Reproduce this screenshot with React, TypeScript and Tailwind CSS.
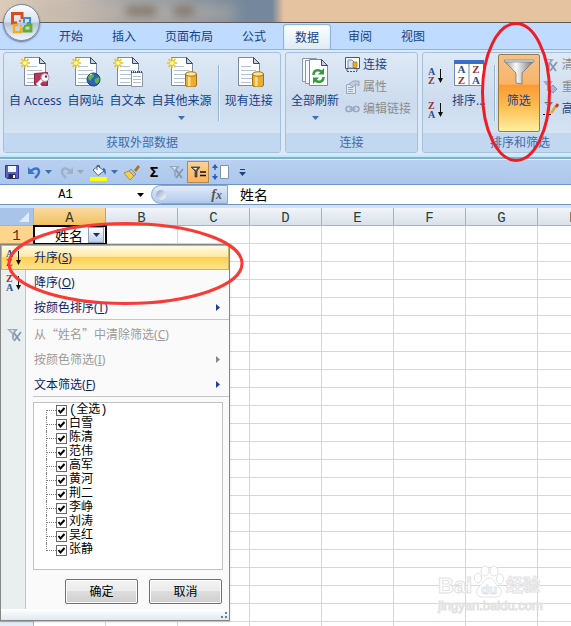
import React, { useState } from "react";

const tabs = ["开始", "插入", "页面布局", "公式", "数据", "审阅", "视图"];
const columns = ["A", "B", "C", "D", "E", "F", "G", "H", "I", "J", "K", "L", "M", "N", "O", "P", "Q", "R"];
const names = ["(全选)", "白雪", "陈清", "范伟", "高军", "黄河", "荆二", "李峥", "刘涛", "吴红", "张静"];
const rowCount = 40;

/* ---------- Icons ---------- */

const Arrow = ({ className = "fill-[#3f6fae]" }: { className?: string }) => (
  <svg width="7" height="4" viewBox="0 0 7 4" className={className}>
    <path d="M0 0h7L3.500 4z" />
  </svg>
);

const Sparkle = () => (
  <g>
    <path d="M5 1v10M0 6h10M1.500 2l7 8M8.500 2l-7 8" stroke="#e8c21c" strokeWidth="1.500" />
    <circle cx="5" cy="6" r="2" fill="#fff8a0" />
  </g>
);

const Sheet = () => (
  <g>
    <path d="M4.500.5h15l6 6v22h-21z" fill="#fbfdff" stroke="#7b8ba5" />
    <path d="M19.500.5v6h6z" fill="#c5d3e6" stroke="#3c4a60" />
    <path d="M7 9.500h10M7 13.500h15M7 17.500h15M7 21.500h15M7 25.500h10" stroke="#b4c0d4" />
  </g>
);

const Cylinder = () => (
  <g>
    <path d="M18.500 17v11c0 3 11 3 11 0V17z" fill="#e9ae30" stroke="#a66f12" />
    <path d="M21 19v10h2.500V19z" fill="#fbe08a" />
    <ellipse cx="24" cy="17" rx="5.500" ry="2.200" fill="#ffe9a0" stroke="#a66f12" />
  </g>
);

const AccessIcon = () => (
  <svg width="30" height="30" viewBox="0 0 30 30">
    <Sheet />
    <Sparkle />
    <path d="M14.500 16.500l13-1v13l-13-1z" fill="#b5375c" stroke="#8c1f42" />
    <path d="M17 28l6-6" stroke="#fff" strokeWidth="3" />
    <path d="M19 28l2 1" stroke="#fff" strokeWidth="2" />
    <circle cx="25" cy="20.500" r="4" fill="#fff" stroke="#b98a9a" />
    <circle cx="26" cy="19.500" r="1.200" fill="#8c1f42" />
  </svg>
);

const WebIcon = () => (
  <svg width="30" height="30" viewBox="0 0 30 30">
    <Sheet />
    <Sparkle />
    <circle cx="22.500" cy="22.500" r="6.500" fill="#2c63b8" stroke="#1b3f80" />
    <path d="M18 18c3-2 5-1 5 1s-3 2-3 4-3-1-3-2zM24 22l4-2c1 3 0 5-2 7-2-1-3-3-2-5z" fill="#5fb548" />
    <path d="M19 18l2-1" stroke="#d9efff" />
  </svg>
);

const TextIcon = () => (
  <svg width="30" height="30" viewBox="0 0 30 30">
    <Sheet />
    <Sparkle />
    <path d="M18.500 15.500h11v14h-11z" fill="#fff" stroke="#8a97ab" />
    <path d="M18 15h12" stroke="#3c4a60" strokeWidth="2" strokeDasharray="1 1" />
    <path d="M20 19.500h8M20 22.500h8M20 25.500h8" stroke="#b4c0d4" />
  </svg>
);

const OtherIcon = () => (
  <svg width="30" height="30" viewBox="0 0 30 30">
    <Sheet />
    <Sparkle />
    <Cylinder />
  </svg>
);

const ExistingIcon = () => (
  <svg width="30" height="30" viewBox="0 0 30 30">
    <Sheet />
    <Cylinder />
  </svg>
);

const RefreshIcon = () => (
  <svg width="28" height="30" viewBox="0 0 28 30">
    <path d="M1.500 1.500h14v23h-14z" fill="#f4f7fb" stroke="#8a97ab" />
    <path d="M4.500 3.500h14v23h-14z" fill="#f4f7fb" stroke="#8a97ab" />
    <path d="M8.500 2.500h12l6 6v20h-18z" fill="#fff" stroke="#7b8ba5" />
    <path d="M20.500 2.500v6h6z" fill="#c5d3e6" stroke="#3c4a60" />
    <path d="M12.500 18c0-5 5-6 8-3.500" fill="none" stroke="#2f9e3c" strokeWidth="2.500" />
    <path d="M23 11v6.500h-6z" fill="#2f9e3c" />
    <path d="M22.500 20c0 5-5 6-8 3.500" fill="none" stroke="#2f9e3c" strokeWidth="2.500" />
    <path d="M12 27v-6.500h6z" fill="#2f9e3c" />
  </svg>
);

const SortIcon = ({ desc = false }: { desc?: boolean }) => (
  <svg width="16" height="18" viewBox="0 0 16 18" className="font-['Liberation_Serif',serif] font-bold">
    <text x="0" y="8" fontSize="10" fill={desc ? "#9c2f33" : "#2f4f94"}>
      {desc ? "Z" : "A"}
    </text>
    <text x="0" y="17" fontSize="10" fill={desc ? "#2f4f94" : "#9c2f33"}>
      {desc ? "A" : "Z"}
    </text>
    <path d="M12.500 2v11" stroke="#111" />
    <path d="M10 11h5l-2.500 5z" fill="#111" />
  </svg>
);

const SortDialogIcon = () => (
  <svg width="30" height="30" viewBox="0 0 30 30" className="font-['Liberation_Serif',serif] font-bold">
    <path d="M.5 3.500h29v25H.5z" fill="#fff" stroke="#6d89b8" />
    <path d="M0 3h30v4H0z" fill="#3a6fd0" />
    <path d="M15 7v21" stroke="#6d89b8" />
    <g fontSize="11" textAnchor="middle">
      <text x="7.500" y="16" fill="#2f4f94">A</text>
      <text x="7.500" y="27" fill="#9c2f33">Z</text>
      <text x="22" y="16" fill="#9c2f33">Z</text>
      <text x="22" y="27" fill="#2f4f94">A</text>
    </g>
  </svg>
);

const FunnelIcon = () => (
  <svg width="32" height="30" viewBox="0 0 32 30">
    <defs>
      <linearGradient id="metal" x1="0" x2="1">
        <stop offset="0" stopColor="#8e8e8e" />
        <stop offset=".4" stopColor="#fafafa" />
        <stop offset="1" stopColor="#6f6f6f" />
      </linearGradient>
    </defs>
    <path d="M1 4h30L19 16v11l-6-1V16z" fill="url(#metal)" stroke="#777" strokeWidth=".8" />
    <path d="M1 3h30v2H2z" fill="#ddd" stroke="#777" strokeWidth=".6" />
  </svg>
);

const FunnelClearIcon = () => (
  <svg width="15" height="14" viewBox="0 0 15 14">
    <path d="M0 1h11L7 6v6l-2-1V6z" fill="#9aa9c2" />
    <path d="M3 2h4L6 5z" fill="#dfe6f0" />
    <path d="M7 5l6 8M14 4l-7 9" stroke="#8696b0" strokeWidth="1.800" />
  </svg>
);

const ReapplyIcon = () => (
  <svg width="15" height="14" viewBox="0 0 15 14">
    <path d="M0 1h10L6 6v5H4V6z" fill="#9aa9c2" />
    <path d="M10 5l4 4-4 4-4-4z" fill="#a9b7cd" stroke="#8696b0" />
  </svg>
);

const AdvancedIcon = () => (
  <svg width="16" height="16" viewBox="0 0 16 16">
    <path d="M1 1h9L7 5v5H5V5z" fill="#777" />
    <path d="M3 2h3L5 4z" fill="#fff" />
    <path d="M8 12l5-7" stroke="#e1a93c" strokeWidth="3" />
    <path d="M13 6l2-3" stroke="#c23b2a" strokeWidth="3" />
    <path d="M0 13.500h9" stroke="#111" strokeDasharray="2 1" />
  </svg>
);

const ConnectionIcon = () => (
  <svg width="15" height="16" viewBox="0 0 15 16">
    <path d="M.5.5h14v11H.5z" fill="#fff" stroke="#44587a" />
    <path d="M3 3h4l2 2v6H3z" fill="#dbe6f5" stroke="#7b8ba5" />
    <path d="M8 5v5c0 1 4 1 4 0V5z" fill="#e9ae30" stroke="#a66f12" strokeWidth=".7" />
    <path d="M2 12v3M12 12v3M2 14.500h10" stroke="#44587a" strokeDasharray="2 1" />
  </svg>
);

const PropertiesIcon = () => (
  <svg width="15" height="14" viewBox="0 0 15 14">
    <path d="M1.500 4.500h9v9h-9z" fill="#e3e9f2" stroke="#98a8c0" />
    <path d="M3 7.500h5M3 9.500h5M3 11.500h5" stroke="#98a8c0" />
    <path d="M4 4l4-3h6v5l-3-2-3 3z" fill="#c0cbdc" stroke="#98a8c0" />
  </svg>
);

const LinksIcon = () => (
  <svg width="15" height="8" viewBox="0 0 15 8" fill="none" stroke="#98a8c0" strokeWidth="1.500">
    <rect x="1" y="1.500" width="6" height="5" rx="2.500" />
    <rect x="8" y="1.500" width="6" height="5" rx="2.500" />
    <path d="M4.500 4h6" />
  </svg>
);

const SaveIcon = () => (
  <svg width="14" height="14" viewBox="0 0 14 14">
    <path d="M.5.5h13v13H2l-1.500-1.500z" fill="#5a62c6" stroke="#34378a" />
    <path d="M3 1h8v6H3z" fill="#f3f5ff" />
    <path d="M3.500 9h7v5h-7z" fill="#2a2c55" />
    <path d="M8 10h2v3H8z" fill="#fff" />
  </svg>
);

const UndoIcon = ({ className = "" }: { className?: string }) => (
  <svg width="13" height="13" viewBox="0 0 13 13" className={className}>
    <path d="M3 5c4-4 8-3 8 1 0 2-2 4-4 6" fill="none" stroke="currentColor" strokeWidth="2.500" />
    <path d="M0 1v7h7z" fill="currentColor" />
  </svg>
);

const FillIcon = () => (
  <svg width="17" height="17" viewBox="0 0 17 17">
    <path d="M3 6l5-4 6 5-6 4.500z" fill="#f4f8ff" stroke="#4a6590" />
    <path d="M7 6V1.500h2.500V4" fill="none" stroke="#4a6590" />
    <path d="M13 4c3 0 3 3 2.500 7L13 7z" fill="#3c70c0" />
    <path d="M0 13h17v4H0z" fill="#ffff00" />
  </svg>
);

const PainterIcon = () => (
  <svg width="16" height="15" viewBox="0 0 16 15">
    <path d="M10 5l4-5 2 2-4 5z" fill="#a87428" />
    <path d="M7 4l5 5-2 2-5-5z" fill="#b7bfcc" stroke="#6d7480" strokeWidth=".7" />
    <path d="M5 6l5 5-4 4-6-7z" fill="#f1cf52" stroke="#a98320" strokeWidth=".8" />
  </svg>
);

const FunnelEqualIcon = () => (
  <svg width="15" height="12" viewBox="0 0 15 12">
    <path d="M0 1h9L6 5v6H4V5z" fill="#555" stroke="#333" strokeWidth=".7" />
    <path d="M2 2h4L5 4z" fill="#fff" />
    <path d="M9 6h6M9 9.500h6" stroke="#111" strokeWidth="1.500" />
  </svg>
);

const RowHeightIcon = () => (
  <svg width="17" height="16" viewBox="0 0 17 16">
    <path d="M3 1v5M3 10v5" stroke="#2b5fb5" strokeWidth="1.500" />
    <path d="M0 4l3-4 3 4zM0 12l3 4 3-4z" fill="#2b5fb5" />
    <path d="M8.500 1.500h8v13h-8z" fill="#fff" stroke="#7f93b5" />
  </svg>
);

const OfficeLogo = () => (
  <svg width="24" height="24" viewBox="0 0 24 24" fill="none">
    <path d="M7 12H2.500V2.500H12V8" stroke="#dd4b1c" strokeWidth="3" />
    <path d="M14 10V7h6v5h-3" stroke="#3d8ed8" strokeWidth="2.200" />
    <path d="M8 14H4v7h7v-4" stroke="#f5ac18" strokeWidth="2.500" />
    <path d="M16 14h5v6h-7v-4" stroke="#63ad2f" strokeWidth="2.800" />
    <path d="M9 9h2v2H9z" fill="#ec6a1f" />
    <path d="M13 10h2v2h-2z" fill="#3d8ed8" />
    <path d="M10 14h2v2h-2z" fill="#f5ac18" />
    <path d="M14 14h2v2h-2z" fill="#63ad2f" />
  </svg>
);

/* ---------- Ribbon ---------- */

interface GroupProps {
  label: string;
  className: string;
  children: React.ReactNode;
}

const Group: React.FC<GroupProps> = ({ label, className, children }) => (
  <section
    className={`flex shrink-0 flex-col overflow-hidden rounded-[3px] border border-[#a5c0de] bg-linear-to-b from-[#dfe9f5] via-[#ccdcee] to-[#d9e8f6] ${className}`}
  >
    <div className="flex h-20 px-[5px]">{children}</div>
    <h2 className="h-[19px] bg-[#c2d8f0] text-center leading-[19px] text-[#3e6aaa]">{label}</h2>
  </section>
);

interface BigButtonProps {
  label: string;
  icon: React.ReactNode;
  menu?: boolean;
}

const BigButton: React.FC<BigButtonProps> = ({ label, icon, menu }) => (
  <button className="flex shrink-0 flex-col items-center whitespace-nowrap pt-1 text-[#15428b]">
    {icon}
    <span className="mt-[6px] leading-4">{label}</span>
    {menu && (
      <span className="mt-[7px]">
        <Arrow />
      </span>
    )}
  </button>
);

const SmallButton: React.FC<{ label: string; icon: React.ReactNode; disabled?: boolean }> = ({
  label,
  icon,
  disabled,
}) => (
  <button
    disabled={disabled}
    className="flex h-[22px] items-center gap-[3px] whitespace-nowrap text-[#15428b] disabled:text-[#8d8d8d]"
  >
    <span className="flex w-4 justify-center">{icon}</span>
    {label}
  </button>
);

const Divider = () => <div className="mt-3 h-[56px] w-px shrink-0 bg-[#8fb2dc] shadow-[1px_0_0_#eef5fc]" />;

const Ribbon = () => (
  <div className="border-t border-[#8db2e3] bg-[#dce9f6]">
    <div className="flex gap-1 overflow-hidden border-b-2 border-[#b5f0fa] py-[2px] pl-[3px]">
      <Group label="获取外部数据" className="w-[278px]">
        <div className="flex gap-[6px]">
          <BigButton label="自 Access" icon={<AccessIcon />} />
          <BigButton label="自网站" icon={<WebIcon />} />
          <BigButton label="自文本" icon={<TextIcon />} />
          <BigButton label="自其他来源" icon={<OtherIcon />} menu />
          <Divider />
          <BigButton label="现有连接" icon={<ExistingIcon />} />
        </div>
      </Group>
      <Group label="连接" className="w-[133px]">
        <BigButton label="全部刷新" icon={<RefreshIcon />} menu />
        <div className="ml-[5px] flex flex-col pt-px">
          <SmallButton label="连接" icon={<ConnectionIcon />} />
          <SmallButton label="属性" icon={<PropertiesIcon />} disabled />
          <SmallButton label="编辑链接" icon={<LinksIcon />} disabled />
        </div>
      </Group>
      <Group label="排序和筛选" className="w-[196px]">
        <div className="flex w-4 flex-col gap-4 pt-[14px]">
          <button aria-label="升序">
            <SortIcon />
          </button>
          <button aria-label="降序">
            <SortIcon desc />
          </button>
        </div>
        <div className="ml-2 flex gap-2">
          <BigButton label="排序..." icon={<SortDialogIcon />} />
          <Divider />
        </div>
        <button className="ml-[3px] mt-px flex h-[78px] w-[42px] shrink-0 flex-col items-center rounded-xs border border-[#9a7b45] bg-[linear-gradient(#f3c08a,#f8b468_38%,#fc9a35_40%,#fdb94a_65%,#fff0a0)] pt-[2px] text-[#15428b]">
          <FunnelIcon />
          <span className="mt-[6px] leading-4">筛选</span>
        </button>
        <div className="ml-[3px] flex flex-col pt-px">
          <SmallButton label="清除" icon={<FunnelClearIcon />} disabled />
          <SmallButton label="重新应用" icon={<ReapplyIcon />} disabled />
          <SmallButton label="高级" icon={<AdvancedIcon />} />
        </div>
      </Group>
    </div>
  </div>
);

const QuickButton: React.FC<{ label: string; className: string; children: React.ReactNode }> = ({
  label,
  className,
  children,
}) => (
  <button aria-label={label} className={`flex h-[22px] shrink-0 items-center justify-center ${className}`}>
    {children}
  </button>
);

const QuickAccess = () => (
  <div className="flex h-[26px] shrink-0 items-center border-y border-t-[#eaf3fd] border-b-[#6f93c4] bg-linear-to-b from-[#b9d1f0] to-[#abc7eb]">
    <QuickButton label="保存" className="w-6"><SaveIcon /></QuickButton>
    <QuickButton label="撤消" className="w-5"><UndoIcon className="text-[#3f74cc]" /></QuickButton>
    <QuickButton label="撤消列表" className="w-2"><Arrow /></QuickButton>
    <QuickButton label="恢复" className="ml-1 w-5"><UndoIcon className="-scale-x-100 text-[#a3b1c6]" /></QuickButton>
    <QuickButton label="恢复列表" className="w-2"><Arrow className="fill-[#9aa7b8]" /></QuickButton>
    <QuickButton label="填充颜色" className="ml-1 w-5"><FillIcon /></QuickButton>
    <QuickButton label="填充颜色列表" className="ml-[2px] w-2"><Arrow /></QuickButton>
    <QuickButton label="格式刷" className="ml-1 w-5"><PainterIcon /></QuickButton>
    <QuickButton label="自动求和" className="ml-[2px] w-5 text-sm font-bold text-black">Σ</QuickButton>
    <QuickButton label="清除筛选" className="ml-[2px] w-5"><FunnelClearIcon /></QuickButton>
    <QuickButton label="自动筛选" className="ml-px w-[22px] border border-[#b08a50] bg-linear-to-b from-[#fbd09a] to-[#fdb254]">
      <FunnelEqualIcon />
    </QuickButton>
    <QuickButton label="行高" className="ml-px w-5"><RowHeightIcon /></QuickButton>
    <QuickButton label="自定义快速访问工具栏" className="ml-[7px] w-[10px] flex-col gap-[2px]">
      <span className="h-px w-[5px] bg-[#1f3f78]" />
      <Arrow className="fill-[#1f3f78]" />
    </QuickButton>
  </div>
);

const FormulaBar = () => (
  <div className="flex h-5 shrink-0 border-b border-[#6f93c4] bg-white text-black">
    <input
      aria-label="名称框"
      defaultValue="A1"
      className="ml-px w-[129px] bg-white text-center font-['Liberation_Mono',monospace] text-xs outline-none"
    />
    <button aria-label="名称列表" className="flex w-[21px] items-center justify-center">
      <Arrow className="fill-black" />
    </button>
    <div className="flex w-[77px] items-center justify-between rounded-l-full border border-[#86a7d4] bg-linear-to-b from-[#e0ebf9] to-[#b0caec] pl-1 pr-[5px]">
      <span className="size-[10px] rounded-full bg-linear-to-br from-[#8fa3c2] to-white" />
      <span className="font-['Liberation_Serif',serif] text-sm font-bold italic leading-4 text-[#555]">
        f<span className="text-xs">x</span>
      </span>
    </div>
    <input
      aria-label="编辑栏"
      defaultValue="姓名"
      className="min-w-0 flex-1 bg-white pl-3 text-sm leading-4 outline-none"
    />
  </div>
);

/* ---------- Filter drop-down ---------- */

interface MenuItemProps {
  text: React.ReactNode;
  hotkey: string;
  icon?: React.ReactNode;
  submenu?: boolean;
  disabled?: boolean;
  active?: boolean;
}

const MenuItem: React.FC<MenuItemProps> = ({ text, hotkey, icon, submenu, disabled, active }) => (
  <button
    disabled={disabled}
    className={`flex h-[25px] w-full items-center border text-[#0b1f6b] disabled:text-[#9b9b9b] ${
      active
        ? "border-[#c9b36a] bg-[linear-gradient(#fffbe6,#ffe9a6_45%,#ffd04f_50%,#ffe48e)]"
        : "border-transparent"
    }`}
  >
    <span className="flex w-6 justify-center">{icon}</span>
    <span className="flex-1 pl-2 text-left">
      {text}(<u>{hotkey}</u>)
    </span>
    {submenu && (
      <svg width="4" height="7" viewBox="0 0 4 7" className={`mr-2 ${disabled ? "fill-[#888]" : "fill-[#243f8f]"}`}>
        <path d="M0 0v7l4-3.500z" />
      </svg>
    )}
  </button>
);

const MenuLine = () => <div className="-mt-px ml-8 h-px bg-[#c5c5c5]" />;

const FilterMenu = () => {
  const [checked, setChecked] = useState<string[]>(names);

  const toggle = (name: string) => {
    if (name === names[0]) {
      setChecked(checked.includes(name) ? [] : names);
      return;
    }
    setChecked(checked.includes(name) ? checked.filter((n) => n !== name) : [...checked, name]);
  };

  return (
    <div className="absolute left-0 top-9 w-[230px] border border-[#868686] text-xs shadow-sm">
      <div className="bg-[linear-gradient(to_right,#e9eeee_24px,#c5c5c5_24px,#c5c5c5_25px,#fafafa_25px)] pb-[5px]">
        <MenuItem text="升序" hotkey="S" icon={<SortIcon />} active />
        <MenuItem text="降序" hotkey="O" icon={<SortIcon desc />} />
        <MenuItem text="按颜色排序" hotkey="T" submenu />
        <MenuLine />
        <div className="h-[2px]" />
        <MenuItem
          text={<span className="font-['Noto_Sans_CJK_SC',sans-serif]">从“姓名”中清除筛选</span>}
          hotkey="C"
          icon={<FunnelClearIcon />}
          disabled
        />
        <MenuItem text="按颜色筛选" hotkey="I" submenu disabled />
        <MenuItem text="文本筛选" hotkey="F" submenu />
        <MenuLine />

        <ul className="ml-8 mr-[6px] mt-[5px] border border-[#c0c0c0] bg-white pb-3 pl-3 font-['Liberation_Mono','Noto_Sans_CJK_SC',monospace] text-black">
          {names.map((name, i) => (
            <li key={name} className="flex h-[14px] items-center">
              <span
                className={`w-px self-stretch border-l border-dotted border-[#808080] ${
                  i === 0 ? "mt-[7px]" : i === names.length - 1 ? "mb-[6px]" : ""
                }`}
              />
              <span className="w-[9px] border-t border-dotted border-[#808080]" />
              <label className="relative flex items-center gap-[2px] leading-[14px]">
                <input
                  type="checkbox"
                  checked={checked.includes(name)}
                  onChange={() => toggle(name)}
                  className="peer size-[11px] appearance-none border border-[#6a6a6a] bg-white"
                />
                <svg
                  width="11"
                  height="11"
                  viewBox="0 0 11 11"
                  className="pointer-events-none invisible absolute left-0 peer-checked:visible"
                >
                  <path d="M2.500 5l2 2.500L8.500 3" fill="none" stroke="#000" strokeWidth="2" />
                </svg>
                <span>{name}</span>
              </label>
            </li>
          ))}
        </ul>

        <div className="mr-[7px] mt-[9px] flex justify-end gap-[11px] text-black">
          {["确定", "取消"].map((label) => (
            <button
              key={label}
              className="h-[25px] w-[73px] rounded-xs border border-[#707070] bg-[linear-gradient(#f3f3f3,#ebebeb_48%,#dddddd_50%,#cfcfcf)] shadow-[inset_0_0_0_1px_#fcfcfc]"
            >
              {label}
            </button>
          ))}
        </div>
      </div>
      <div className="flex h-[11px] items-end justify-end bg-linear-to-b from-white to-[#dfeaf0] p-px">
        <svg width="7" height="7" viewBox="0 0 7 7" className="fill-[#6580ad]">
          <path d="M4 0h2v2H4zM0 4h2v2H0zM4 4h2v2H4z" />
        </svg>
      </div>
    </div>
  );
};

/* ---------- Sheet ---------- */

const Worksheet = () => (
  <div className="relative min-h-0 flex-1 overflow-hidden border-t-[3px] border-[#d4e3f6] bg-white">
    <div className="relative">
      <table className="w-[1330px] table-fixed border-separate border-spacing-0 font-['Liberation_Mono',monospace] text-sm">
        <thead>
          <tr className="h-[18px]">
            <th className="w-[34px] border-b border-r border-[#9eb6ce] bg-[#a9c4e9] p-0">
              <svg width="10" height="10" viewBox="0 0 10 10" className="ml-auto mr-1 fill-[#dfeafa]">
                <path d="M10 0v10H0z" />
              </svg>
            </th>
            {columns.map((c) => (
              <th
                key={c}
                className={`w-[72px] border-b border-r px-0 pb-0 pt-[3px] font-normal leading-[14px] ${
                  c === "A"
                    ? "border-[#f29536] bg-linear-to-b from-[#f9d99f] to-[#f1c15f] text-[#3a3320]"
                    : "border-[#9eb6ce] bg-linear-to-b from-[#f2f5f9] to-[#d9e0ea] text-[#27413e]"
                }`}
              >
                {c}
              </th>
            ))}
          </tr>
        </thead>
        <tbody>
          {Array.from({ length: rowCount }, (_, r) => (
            <tr key={r} className="h-[18px]">
              <th
                className={`border-b border-r px-0 pb-0 pt-[3px] font-normal leading-[14px] ${
                  r === 0 ? "border-[#f29536] bg-[#ffd58d] text-[#3a3320]" : "border-[#9eb6ce] bg-[#e4ecf7]"
                }`}
              >
                {r + 1}
              </th>
              {columns.map((c) =>
                r === 0 && c === "A" ? (
                  <td key={c} className="bg-white p-0 outline-2 -outline-offset-1 outline-black">
                    <div className="flex h-[17px] items-center justify-end gap-[5px] pr-[2px] font-['Noto_Sans_CJK_SC',sans-serif] leading-4">
                      姓名
                      <button
                        aria-label="筛选姓名"
                        className="flex size-4 items-center justify-center border border-[#8f9fb8] bg-linear-to-b from-white to-[#b9cdea]"
                      >
                        <Arrow className="fill-[#1f2f5c]" />
                      </button>
                    </div>
                  </td>
                ) : (
                  <td key={c} className="border-b border-r border-[#d0d7e5] p-0" />
                )
              )}
            </tr>
          ))}
        </tbody>
      </table>
      <FilterMenu />
    </div>
  </div>
);

const Watermark = () => (
  <div className="pointer-events-none absolute bottom-3 right-[31px] w-[102px] font-['Liberation_Sans','Noto_Sans_CJK_SC',sans-serif] font-bold text-white [-webkit-text-stroke:1px_#e2e2e2]">
    <div className="flex h-[34px] items-end justify-between">
      <span className="text-[22px] leading-6">Bai</span>
      <svg width="30" height="33" viewBox="0 0 30 33" fill="#fff" stroke="#e2e2e2">
        <ellipse cx="11" cy="6" rx="4" ry="5" />
        <ellipse cx="20" cy="6" rx="4" ry="5" />
        <ellipse cx="4" cy="13" rx="3.500" ry="5" />
        <ellipse cx="26" cy="14" rx="3.500" ry="5" />
        <path d="M15 13c5 0 6 6 10 9s3 10-3 10H8c-6 0-7-7-3-10s5-9 10-9z" />
        <text x="15" y="29" textAnchor="middle" fontSize="13">du</text>
      </svg>
      <span className="text-[17px] leading-6">经验</span>
    </div>
    <div className="whitespace-nowrap text-[13px] font-normal leading-4">jingyan.baidu.com</div>
  </div>
);

export default function App() {
  return (
    <div
      lang="zh-CN"
      className="relative flex h-screen flex-col overflow-hidden bg-[#bfdbff] font-['Noto_Sans','Noto_Sans_CJK_SC',sans-serif] text-xs"
    >
      {/* Glass title bar with the desktop showing through */}
      <header className="relative h-[23px] shrink-0 overflow-hidden border-b border-[#5f5a58] bg-[linear-gradient(to_right,#dccbb8,#c9bdb4_70px,#a3a5a8_120px,#8e98a4_180px,#74879c_220px,#74879c_272px,#e5c3a0_284px)]">
        <div className="ml-[35px] h-[18px] w-[200px] translate-y-1 bg-[#c5b5a5]/60 blur-sm" />
        <div className="absolute left-[126px] top-[6px] h-[10px] w-[30px] bg-[#756659]/70 blur-xs" />
        <div className="absolute left-[174px] top-[6px] h-[10px] w-[20px] bg-[#756659]/70 blur-xs" />
      </header>

      <button
        aria-label="Office 按钮"
        className="absolute left-[3px] top-1 flex size-[37px] items-center justify-center rounded-full border border-[#75859f] bg-[linear-gradient(#fdfdfe,#d9e0ea_48%,#b6c3d6_52%,#f2f7fc)] shadow-[0_1px_2px_#5b6f8f]"
      >
        <OfficeLogo />
      </button>

      <nav className="flex h-[26px] shrink-0 gap-[5px] pl-[47px] pt-px">
        {tabs.map((t) => (
          <button
            key={t}
            className={`shrink-0 px-[11px] leading-[23px] text-[#15428b] ${
              t === "数据"
                ? "-mb-px rounded-t-[3px] border border-b-0 border-[#8db2e3] bg-linear-to-b from-white to-[#dfeaf6] shadow-[inset_0_0_2px_#9ff0ff]"
                : "border border-transparent"
            }`}
          >
            {t}
          </button>
        ))}
      </nav>

      <Ribbon />
      <div className="h-[2px] shrink-0 bg-[#8aa9d6]" />
      <QuickAccess />
      <FormulaBar />
      <Worksheet />
      <Watermark />

      {/* Hand-drawn marks round the filter button and the sort commands */}
      <svg width="571" height="320" className="pointer-events-none absolute left-0 top-0" fill="none">
        <ellipse cx="516" cy="92" rx="33.500" ry="68.500" stroke="#ee1c25" strokeWidth="3" />
        <ellipse cx="125.500" cy="263.500" rx="116.500" ry="40" stroke="#fb3a36" strokeWidth="3" />
      </svg>
    </div>
  );
}
